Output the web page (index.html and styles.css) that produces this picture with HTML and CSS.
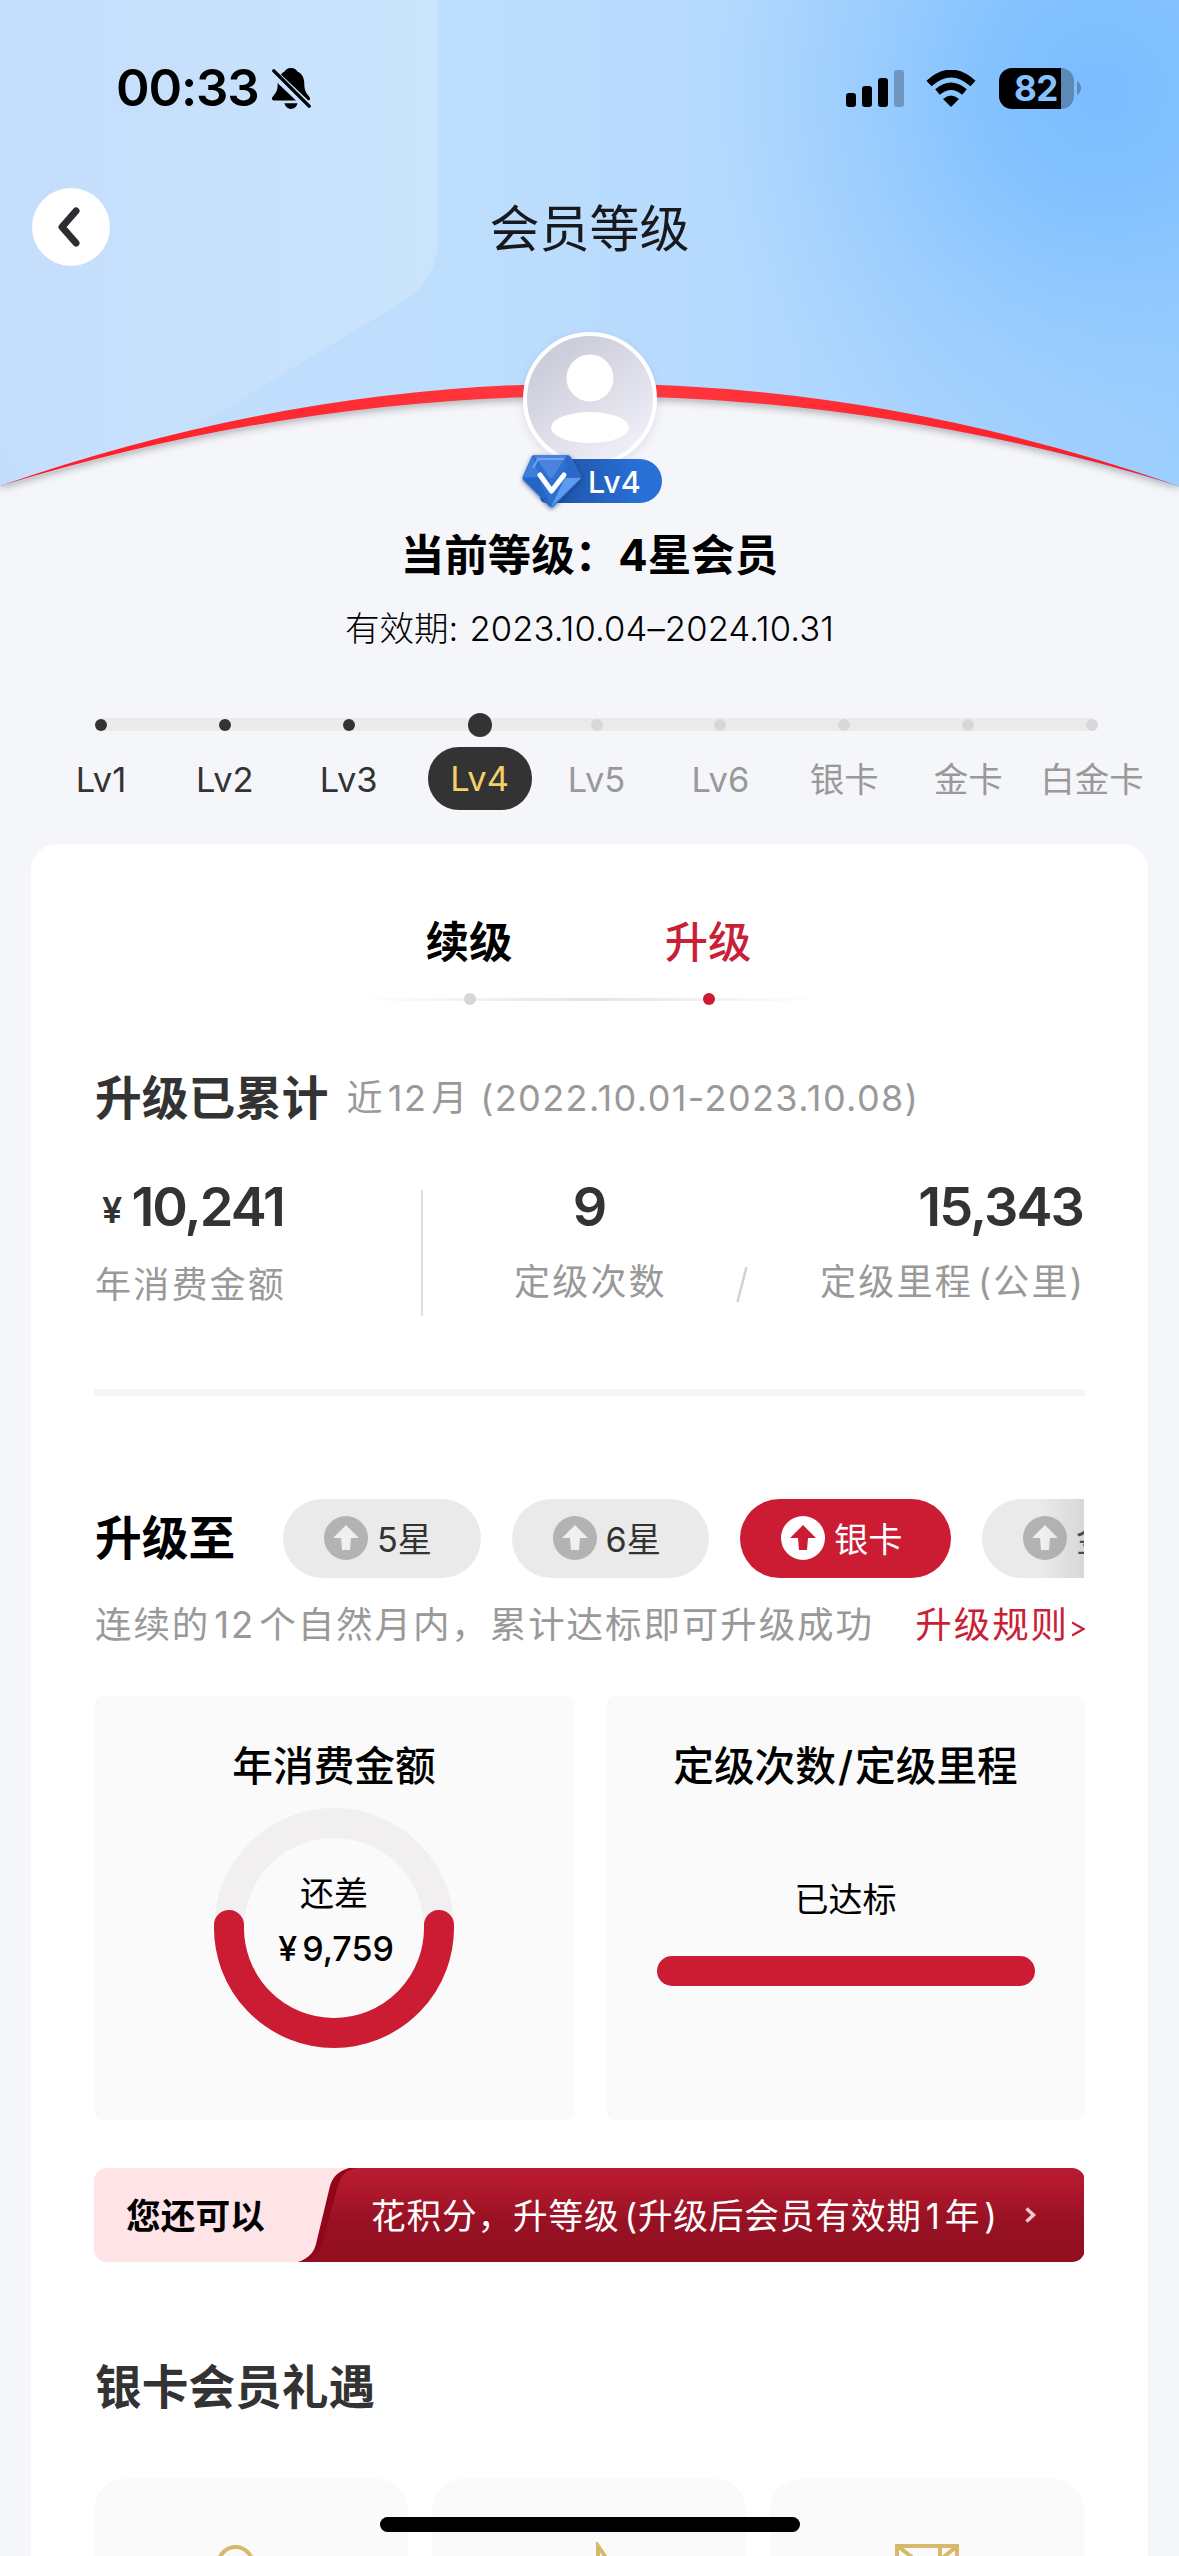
FILE: index.html
```html
<!DOCTYPE html>
<html lang="zh-CN">
<head>
<meta charset="utf-8">
<title>会员等级</title>
<link rel="stylesheet" href="styles.css">
</head>
<body>
<div class="screen">
  <header class="hero">
    <svg class="hero-bg" width="1179" height="520" viewBox="0 0 1179 520">
      <defs>
        <linearGradient id="sky" x1="0" y1="0" x2="1" y2="0">
          <stop offset="0" stop-color="#c2ddfc"/><stop offset=".38" stop-color="#bedefd"/><stop offset=".6" stop-color="#b6dafe"/><stop offset=".78" stop-color="#a8d3fe"/><stop offset="1" stop-color="#9ccefe"/>
        </linearGradient>
        <radialGradient id="glow" gradientUnits="userSpaceOnUse" cx="0" cy="0" r="1" gradientTransform="translate(1100 90) scale(400 400)">
          <stop offset="0" stop-color="#7abcff"/><stop offset=".3" stop-color="#7fc0ff" stop-opacity=".85"/><stop offset=".65" stop-color="#8ac5ff" stop-opacity=".4"/><stop offset="1" stop-color="#98ccff" stop-opacity="0"/>
        </radialGradient>
        <linearGradient id="panel" x1="0" y1="0" x2="1" y2="0">
          <stop offset="0" stop-color="#c3ddfc"/><stop offset=".5" stop-color="#c7e1fc"/><stop offset="1" stop-color="#cae4fc"/>
        </linearGradient>
        <linearGradient id="arc" x1="0" y1="0" x2="1" y2="0">
          <stop offset="0" stop-color="#ff1a20"/><stop offset=".5" stop-color="#ff3a42"/><stop offset="1" stop-color="#ff1a20"/>
        </linearGradient>
        <filter id="soft" x="-5%" y="-20%" width="110%" height="150%"><feGaussianBlur stdDeviation="4"/></filter>
        <clipPath id="below"><path d="M0 487Q589.5 305 1179 487V520H0Z"/></clipPath>
      </defs>
      <rect width="1179" height="487" fill="url(#sky)"/>
      <rect width="1179" height="487" fill="url(#glow)"/>
      <path d="M0 0H438V240Q438 280 402 302L190 430L100 487H20L0 450Z" fill="url(#panel)"/>
      <path d="M0 487Q589.5 305 1179 487V520H0Z" fill="#f5f6fa"/>
      <path d="M0 484Q589.5 305 1179 484" fill="none" stroke="#000" stroke-opacity=".38" stroke-width="7" filter="url(#soft)" clip-path="url(#below)"/>
      <path d="M0 486Q589.5 281 1179 486Q589.5 306 0 486Z" fill="url(#arc)"/>
    </svg>
    <div class="status">
      <div class="clock">00:33</div>
      <svg class="bell" width="40" height="44" viewBox="0 0 42 46">
        <path d="M21 1c4 0 6 2 7 4 5 2 7 7 7 13 0 7 2 9 5 13 2 3 1 4-1 4H3c-2 0-3-2-1-4 3-4 5-6 5-13 0-6 3-11 7-13 1-2 3-4 7-4Z"/>
        <path d="M14 38H28Q26 44 21 44T14 38Z"/>
        <path d="M1 5L40 42" stroke="#c8e1fc" stroke-width="9"/>
        <path d="M3 4L40 41" stroke="#000" stroke-width="3.6" stroke-linecap="round"/>
      </svg>
      <svg class="signal" width="58" height="37" viewBox="0 0 58 37">
        <rect y="23" width="10" height="14" rx="3"/><rect x="16" y="16" width="10" height="21" rx="3"/><rect x="32" y="8" width="10" height="29" rx="3"/><rect x="48" width="10" height="37" rx="3" opacity=".25"/>
      </svg>
      <svg class="wifi" width="50" height="37" viewBox="0 0 50 37">
        <path d="M3 13.500Q25 -6.500 47 13.500" fill="none" stroke="#000" stroke-width="7.500"/>
        <path d="M11.500 22Q25 10.500 38.500 22" fill="none" stroke="#000" stroke-width="7"/>
        <path d="M17 29Q25 22 33 29L25 37Z"/>
      </svg>
      <div class="battery"><span>82</span></div>
      <svg class="nub" width="4" height="14" viewBox="0 0 4 14"><path d="M0 0Q4 3 4 7T0 14Z" fill="#5d89b6"/></svg>
    </div>
    <nav class="nav">
      <div class="back"><svg width="26" height="42" viewBox="0 0 26 42"><path d="M21 5L7 21L21 37" fill="none" stroke="#2b2d30" stroke-width="7" stroke-linecap="round" stroke-linejoin="round"/></svg></div>
      <h1>会员等级</h1>
    </nav>
    <div class="profile">
      <div class="avatar"><svg width="126" height="126" viewBox="0 0 126 126"><circle cx="63" cy="42" r="23.500" fill="#fff"/><ellipse cx="63" cy="91.500" rx="39" ry="15.500" fill="#fff"/></svg></div>
      <div class="badge">
        <svg class="gem" width="68" height="64" viewBox="0 0 68 64">
          <defs><filter id="gs"><feDropShadow dx="0" dy="1.500" stdDeviation="2" flood-color="#0d2c63" flood-opacity=".6"/></filter></defs>
          <g filter="url(#gs)"><path d="M16 5H49Q52 5 53.500 8L63 26Q64 28 62 30L36 56Q34 59 31 56L5 30Q4 28 5 26L13 8Q14 5 16 5Z" fill="#2f70cf"/></g>
          <path d="M16 5H49L33 30Z" fill="#4a83df"/><path d="M49 5L63 27H46Z" fill="#2c68c8"/><path d="M14 6L5 27H22Z" fill="#3d7ddb"/>
          <path d="M5 28H20L33 57Z" fill="#2464c3"/><path d="M63 28H47L33 57Z" fill="#5e9af0"/><path d="M20 28H47L33 50Z" fill="#2e70d0"/>
          <path d="M15 18L20 9H46" fill="none" stroke="#83b0f2" stroke-width="2" opacity=".7"/>
          <path d="M22 25L33.500 41L46 25" fill="none" stroke="#fff" stroke-width="5" stroke-linecap="round" stroke-linejoin="round"/>
        </svg>
        <span>Lv4</span>
      </div>
    </div>
  </header>

  <div class="current">当前等级：4星会员</div>
  <div class="valid"><span>有效期: </span><span class="dates">2023.10.04–2024.10.31</span></div>

  <ol class="levels">
    <li class="done"><i></i><b>Lv1</b></li>
    <li class="done"><i></i><b>Lv2</b></li>
    <li class="done"><i></i><b>Lv3</b></li>
    <li class="now"><i></i><b>Lv4</b></li>
    <li><i></i><b>Lv5</b></li>
    <li><i></i><b>Lv6</b></li>
    <li><i></i><b>银卡</b></li>
    <li><i></i><b>金卡</b></li>
    <li><i></i><b>白金卡</b></li>
  </ol>

  <main class="card">
    <div class="tabs">
      <div class="tab"><span>续级</span><i></i></div>
      <div class="tab active"><span>升级</span><i></i></div>
    </div>

    <div class="sum-head"><h2>升级已累计</h2><span>近<em>12</em>月 (2022.10.01-2023.10.08)</span></div>
    <div class="stats">
      <div class="stat money"><strong><small>¥</small>10,241</strong><span>年消费金额</span></div>
      <div class="rule"></div>
      <div class="stat times"><strong>9</strong><span>定级次数</span></div>
      <svg class="slash" width="14" height="38" viewBox="0 0 14 38"><path d="M11.500 1L2.500 36" stroke="#d2d2d2" stroke-width="2.500"/></svg>
      <div class="stat miles"><strong>15,343</strong><span>定级里程<em class="paren">(</em>公里)</span></div>
    </div>
    <div class="hr"></div>

    <div class="target">
      <h2>升级至</h2>
      <div class="chips">
        <div class="chip"><svg width="44" height="44" viewBox="0 0 44 44"><circle cx="22" cy="22" r="22"/><path d="M22 9L35 22H27L26 34H18L17 22H9Z"/></svg><span>5星</span></div>
        <div class="chip"><svg width="44" height="44" viewBox="0 0 44 44"><circle cx="22" cy="22" r="22"/><path d="M22 9L35 22H27L26 34H18L17 22H9Z"/></svg><span>6星</span></div>
        <div class="chip on"><svg width="44" height="44" viewBox="0 0 44 44"><circle cx="22" cy="22" r="22"/><path d="M22 9L35 22H27L26 34H18L17 22H9Z"/></svg><span>银卡</span></div>
        <div class="chip"><svg width="44" height="44" viewBox="0 0 44 44"><circle cx="22" cy="22" r="22"/><path d="M22 9L35 22H27L26 34H18L17 22H9Z"/></svg><span>金卡</span></div>
      </div>
    </div>
    <div class="note"><span>连续的<em>12</em>个自然月内，累计达标即可升级成功</span><a>升级规则<svg width="13" height="18" viewBox="0 0 13 18"><path d="M0 2.500L11.500 9L0 15.500" fill="none" stroke="#c91f37" stroke-width="2.200"/></svg></a></div>

    <div class="goals">
      <section class="goal">
        <h3>年消费金额</h3>
        <div class="ring">
          <svg width="240" height="240" viewBox="0 0 240 240"><circle cx="120" cy="120" r="105" fill="none" stroke="#f1eff0" stroke-width="30"/><path d="M15.040 117A105 105 0 1 0 224.960 117" fill="none" stroke="#cb1c33" stroke-width="30" stroke-linecap="round"/></svg>
          <div class="ring-text"><span>还差</span><strong>¥ 9,759</strong></div>
        </div>
      </section>
      <section class="goal">
        <h3>定级次数<em class="sep">/</em>定级里程</h3>
        <div class="reached">已达标</div>
        <div class="bar"></div>
      </section>
    </div>

    <div class="banner">
      <svg class="banner-bg" width="990" height="94" viewBox="0 0 990 94">
        <defs><linearGradient id="bn" x1="0" y1="0" x2="0" y2="1"><stop offset="0" stop-color="#bb1b30"/><stop offset=".15" stop-color="#b4192e"/><stop offset=".6" stop-color="#961123"/><stop offset="1" stop-color="#920f20"/></linearGradient></defs>
        <rect x="150" width="840" height="94" fill="url(#bn)"/>
        <path d="M200 0H262Q248 2 244 18L228 76Q224 90 208 94H200Z" fill="#92061b"/>
        <path d="M0 0H255Q240 4 236 18L222 76Q219 89 204 94H0Z" fill="#fee3e7"/>
      </svg>
      <b>您还可以</b><span>花积分，升等级<em class="paren">(</em>升级后会员有效期<em>1</em>年<em class="close">)</em></span>
      <svg width="13" height="18" viewBox="0 0 13 18"><path d="M2.500 2.500L9.500 9L2.500 15.500" fill="none" stroke="#f0c8cd" stroke-width="3.500"/></svg>
    </div>

    <h2 class="gifts-title">银卡会员礼遇</h2>
    <div class="gifts">
      <div class="gift"><svg width="100" height="30" viewBox="0 0 100 30"><circle cx="34.500" cy="22" r="17" fill="none" stroke="#d8b96c" stroke-width="4"/></svg></div>
      <div class="gift"><svg width="60" height="30" viewBox="0 0 60 30"><path d="M39 28V4L54 26" fill="none" stroke="#d8b96c" stroke-width="4"/></svg></div>
      <div class="gift"><svg width="66" height="30" viewBox="0 0 66 30"><path d="M1 4H65M3 4V30M5 5L34 28M46 4V30M63 4V30M62 5L46 18" fill="none" stroke="#d8b96c" stroke-width="4"/></svg></div>
    </div>
  </main>
  <div class="home"></div>
</div>
</body>
</html>
```
FILE: styles.css
```css
* { box-sizing: border-box; margin: 0; padding: 0; }
body { background: #f5f6fa; font-family: Inter, "Noto Sans CJK SC", sans-serif; color: #000; }
em, i { font-style: normal; }
svg { display: block; flex: none; }
.screen { position: relative; width: 1179px; height: 2556px; overflow: hidden; display: flex; flex-direction: column; }
.screen > * { flex: none; }

.hero { position: relative; height: 520px; }
.hero-bg { position: absolute; left: 0; top: 0; }
.status { position: relative; height: 131px; padding: 45px 98px 0 116px; display: flex; align-items: center; }
.clock { width: 155px; font-size: 51px; font-weight: 600; letter-spacing: -1.200px; line-height: 60px; white-space: nowrap; }
.bell { margin-top: 1px; }
.signal { margin-left: auto; }
.wifi { margin-left: 22px; }
.battery { margin-left: 23px; width: 75px; height: 41px; border-radius: 13px; background: linear-gradient(90deg, #000 62px, #5d89b6 62px); color: #86c2ff; font-size: 35px; font-weight: 700; line-height: 41px; padding-left: 15px; letter-spacing: -.5px; }
.nub { margin: 0 0 0 3px; }
.nav { position: relative; height: 92px; margin-top: 50px; padding: 0 32px; display: grid; grid-template-columns: 78px 1fr 78px; align-items: center; }
.back { width: 78px; height: 78px; border-radius: 50%; background: #fff; display: flex; align-items: center; justify-content: center; padding-right: 6px; }
.nav h1 { text-align: center; font-size: 50px; font-weight: 400; line-height: 60px; padding-top: 4px; color: #17191c; }
.profile { position: relative; display: flex; flex-direction: column; align-items: center; margin-top: 59px; }
.avatar { width: 134px; height: 134px; border-radius: 50%; border: 4px solid #fff; background: linear-gradient(145deg, #cdcedb 20%, #eff0f8 90%); box-shadow: 0 3px 10px rgba(80, 90, 130, .15); }
.badge { position: relative; width: 122px; height: 44px; margin: -7px 0 0 23px; border-radius: 6px 22px 22px 6px; background: linear-gradient(90deg, #1e4f9e, #286fd6 80%); padding-left: 48px; color: #fff; font-size: 30.500px; font-weight: 500; line-height: 46px; }
.gem { position: absolute; left: -22px; top: -9px; }

.current { height: 70px; line-height: 70px; text-align: center; font-size: 43.500px; font-weight: 700; }
.valid { height: 76px; line-height: 77px; display: flex; justify-content: center; gap: 11px; font-size: 34.600px; font-weight: 300; }
.dates { letter-spacing: .12px; }
.levels { list-style: none; display: grid; grid-template-columns: repeat(9, 123.900px); margin: 34px 0 0 39px; height: 144px; background: linear-gradient(#ebebec, #ebebec) 61px 18px / 991px 13px no-repeat; }
.levels li { display: flex; flex-direction: column; align-items: center; color: #999; white-space: nowrap; }
.levels i { width: 12px; height: 12px; margin: 18.500px 0; border-radius: 50%; background: #d8d8d9; flex: none; }
.levels b { height: 62px; line-height: 61px; font-size: 34.500px; font-weight: 400; display: flex; justify-content: center; }
.levels .done { color: #333; }
.levels .done i { background: #333; }
.levels .now { margin: 0 -7px 0 7px; }
.levels .now i { width: 24px; height: 24px; margin: 12.500px 0 10.500px; background: #333; }
.levels .now b { width: 104px; height: 63px; border-radius: 31px; background: #333; color: #f3d06c; line-height: 63px; }

.card { width: 1117px; margin-left: 31px; height: 1712px; overflow: hidden; background: #fff; border-radius: 26px 26px 0 0; padding: 0 63px; }
.tabs { height: 200px; display: flex; justify-content: center; gap: 153px; padding-top: 66px; background: linear-gradient(90deg, #fff, #e4e4e4 50%, #fff) 50% 154px / 470px 3px no-repeat; }
.tab { display: flex; flex-direction: column; align-items: center; width: 86px; font-size: 43.300px; font-weight: 700; line-height: 64px; white-space: nowrap; }
.tab span { margin-left: -2px; }
.tab i { width: 12px; height: 12px; border-radius: 50%; background: #d6d6d6; margin-top: 19px; }
.active { color: #c91f37; font-weight: 500; }
.active i { background: #cb1c33; }
.sum-head { height: 110px; padding-bottom: 9px; display: flex; align-items: center; gap: 18px; color: #333; white-space: nowrap; }
h2 { font-size: 46.700px; font-weight: 700; padding-left: 1px; }
.sum-head span { font-size: 36px; letter-spacing: 1.400px; color: #999; }
em { margin: 0 4px; }
em.paren { margin: 0 0 0 5px; }
em.sep { margin: 0 2px; }
em.close { margin: 0 0 0 4px; }
.stats { height: 235px; display: flex; color: #333; padding-top: 21px; }
.stat { display: flex; flex-direction: column; }
.stat strong { font-size: 54px; font-weight: 600; letter-spacing: -1.900px; line-height: 64px; white-space: nowrap; }
.stat small { font-size: 36px; margin: 0 11px 0 7px; vertical-align: 3px; }
.stat span { font-size: 36px; letter-spacing: 2.200px; color: #999; line-height: 44px; margin-top: 21px; white-space: nowrap; }
.money { width: 327px; padding-left: 1px; }
.rule { width: 2px; height: 126px; background: #dedede; margin-top: 15px; }
.times { margin-left: 91px; width: 153px; }
.times strong { text-align: center; padding-right: 3px; }
.slash { margin: 91px 0 0 68px; }
.miles { margin-left: auto; align-items: flex-end; }
.miles strong { padding-right: 2px; }
.hr { height: 7px; background: #f6f6f7; }
.target { height: 80px; margin-top: 102px; display: flex; align-items: center; }
.target h2 { width: 189px; flex: none; margin-top: -8px; }
.chips { position: relative; width: 801px; overflow: hidden; display: flex; gap: 31px; }
.chips::after { content: ""; position: absolute; right: 0; top: 0; width: 42px; height: 79px; background: linear-gradient(90deg, rgba(160,160,160,0), rgba(160,160,160,.25)); }
.chip { flex: none; width: 197.500px; height: 79px; border-radius: 40px; background: #eaeaea; padding-left: 41px; display: flex; align-items: center; gap: 9px; font-size: 34.200px; color: #333; white-space: nowrap; }
.chip span { margin-top: -2px; }
.chip circle { fill: #b3b3b3; }
.chip path { fill: #f0f0f0; }
.chip.on { width: 211px; background: #cb1c33; color: #fff; }
.on circle { fill: #fff; }
.on path { fill: #cb1c33; }
.note { height: 118px; line-height: 95px; display: flex; justify-content: space-between; padding-left: 1px; font-size: 36.500px; letter-spacing: 1.920px; color: #999; white-space: nowrap; }
.note a { color: #c91f37; display: flex; }
.note a svg { margin: 42px 0 0 3px; }
.goals { display: grid; grid-template-columns: 480px 479px; gap: 32px; height: 424px; }
.goal { background: #fafafa; border-radius: 9px; display: flex; flex-direction: column; align-items: center; }
.goal h3 { font-size: 40.700px; font-weight: 500; line-height: 60px; margin-top: 41px; }
.ring { margin-top: 11px; display: grid; }
.ring > * { grid-area: 1 / 1; }
.ring-text { display: flex; flex-direction: column; align-items: center; padding-top: 58px; font-size: 34px; line-height: 55px; }
.ring-text strong { font-weight: 500; word-spacing: -4px; padding-left: 4px; }
.reached { font-size: 34px; line-height: 50px; margin-top: 78px; }
.bar { width: 378px; height: 30px; border-radius: 15px; background: #cb1c33; margin-top: 31px; }
.banner { position: relative; height: 94px; margin-top: 48px; border-radius: 13px; overflow: hidden; display: flex; align-items: center; padding-left: 32px; font-size: 34.700px; color: #fff; white-space: nowrap; }
.banner-bg { position: absolute; left: 0; top: 0; }
.banner b { position: relative; width: 245px; margin-top: -2px; font-weight: 700; color: #000; }
.banner span { position: relative; width: 653px; margin-top: -2px; letter-spacing: .8px; }
.banner > svg:last-child { position: relative; }
.gifts-title { margin-top: 90px; line-height: 70px; color: #333; }
.gifts { display: grid; grid-template-columns: repeat(3, 314px); gap: 24px; margin-top: 57px; }
.gift { height: 200px; border-radius: 30px; background: #fafafa; display: flex; justify-content: center; padding-top: 63px; }
.home { position: absolute; left: 380px; top: 2517px; width: 420px; height: 15px; border-radius: 8px; background: #000; }
```
